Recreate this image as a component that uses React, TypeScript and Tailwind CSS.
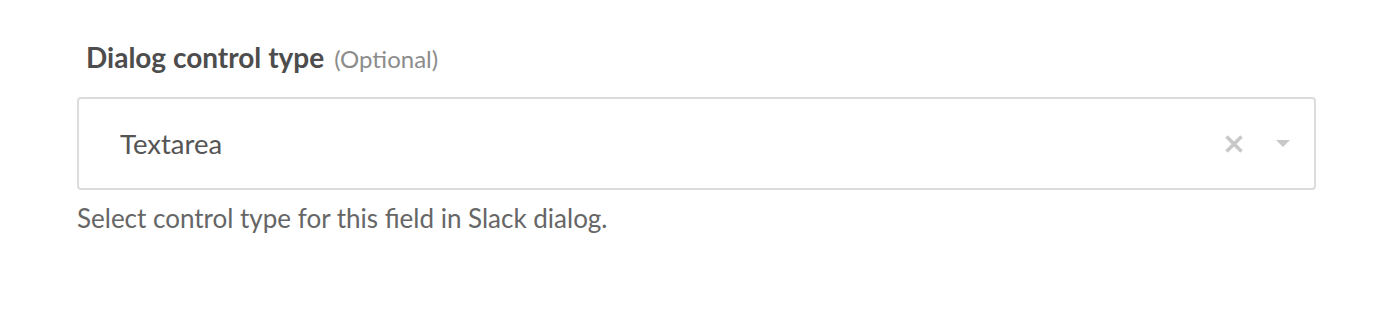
export default function App() {
  return (
    <div
      className="min-h-[316px] w-full bg-white pl-[77px] pr-[81px] pt-[39px]"
      style={{ fontFamily: "Lato, 'Noto Sans', sans-serif" }}
    >
      <div className="flex items-baseline gap-[10px] pl-[9px]">
        <span className="text-[28px] font-bold leading-[36px] text-[#4d4d4d]">
          Dialog control type
        </span>
        <span className="text-[24px] leading-[36px] text-[#8c8c8c]">(Optional)</span>
      </div>

      <div className="mt-[20px] flex h-[93px] items-center rounded-[4px] border-2 border-[#dcdcdc] bg-white pl-[41px] pr-[24px]">
        <span className="flex-1 text-[27.5px] text-[#555555]">Textarea</span>
        <svg width="18" height="18" viewBox="0 0 18 18" className="mr-[33px]">
          <path d="M1.5 1.5 L16.5 16.5 M16.5 1.5 L1.5 16.5" stroke="#c8c8c8" strokeWidth="3.5" strokeLinecap="butt" />
        </svg>
        <svg width="14" height="8" viewBox="0 0 14 8">
          <path d="M0 0 L14 0 L7 7 Z" fill="#c8c8c8" />
        </svg>
      </div>

      <p className="mt-[10px] text-[26px] leading-[36px] text-[#666666]">
        Select control type for this field in Slack dialog.
      </p>
    </div>
  );
}
